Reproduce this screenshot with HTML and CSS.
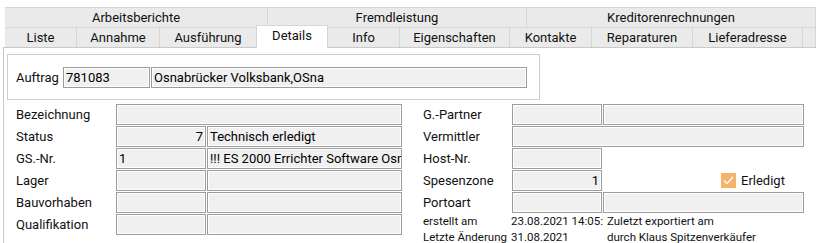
FILE: index.html
```html
<!DOCTYPE html>
<html lang="de">
<head>
    <meta charset="UTF-8">
    <title>Auftrag Details</title>
    <link rel="stylesheet" href="styles.css">
</head>
<body>
    <div class="tabs">
        <div class="tab-groups">
            <div class="group g-arbeit">Arbeitsberichte</div>
            <div class="group g-fremd">Fremdleistung</div>
            <div class="group g-kredit">Kreditorenrechnungen</div>
        </div>
        <div class="tab-row">
            <div class="tab t-liste">Liste</div>
            <div class="tab t-annahme">Annahme</div>
            <div class="tab t-ausf">Ausführung</div>
            <div class="tab t-details active">Details</div>
            <div class="tab t-info">Info</div>
            <div class="tab t-eigen">Eigenschaften</div>
            <div class="tab t-kontakte">Kontakte</div>
            <div class="tab t-rep">Reparaturen</div>
            <div class="tab t-liefer">Lieferadresse</div>
            <div class="tab t-rest"></div>
        </div>
    </div>

    <div class="panel">
        <div class="order-box">
            <span class="order-label">Auftrag</span>
            <div class="field order-nr">781083</div>
            <div class="field order-name">Osnabrücker Volksbank,OSna</div>
        </div>

        <div class="form">
            <div class="col col-left">
                <div class="row">
                    <span class="label">Bezeichnung</span>
                    <div class="field full"></div>
                </div>
                <div class="row">
                    <span class="label">Status</span>
                    <div class="field small right">7</div>
                    <div class="field big">Technisch erledigt</div>
                </div>
                <div class="row">
                    <span class="label">GS.-Nr.</span>
                    <div class="field small">1</div>
                    <div class="field big">!!! ES 2000 Errichter Software Osnabrück</div>
                </div>
                <div class="row">
                    <span class="label">Lager</span>
                    <div class="field small"></div>
                    <div class="field big"></div>
                </div>
                <div class="row">
                    <span class="label">Bauvorhaben</span>
                    <div class="field small"></div>
                    <div class="field big"></div>
                </div>
                <div class="row">
                    <span class="label">Qualifikation</span>
                    <div class="field small"></div>
                    <div class="field big"></div>
                </div>
            </div>

            <div class="col col-right">
                <div class="row">
                    <span class="label">G.-Partner</span>
                    <div class="field small"></div>
                    <div class="field big"></div>
                </div>
                <div class="row">
                    <span class="label">Vermittler</span>
                    <div class="field full"></div>
                </div>
                <div class="row">
                    <span class="label">Host-Nr.</span>
                    <div class="field small"></div>
                </div>
                <div class="row">
                    <span class="label">Spesenzone</span>
                    <div class="field small right">1</div>
                    <label class="check">
                        <span class="check-box">
                            <svg width="15" height="15" viewBox="0 0 15 15"><path d="M3 7.5 L6 10.5 L12 4" fill="none" stroke="#fff" stroke-width="1.3"/></svg>
                        </span>
                        Erledigt
                    </label>
                </div>
                <div class="row">
                    <span class="label">Portoart</span>
                    <div class="field small"></div>
                    <div class="field big"></div>
                </div>
                <div class="info-row">
                    <span class="info-label">erstellt am</span>
                    <span class="info-date">23.08.2021 14:05:13</span>
                    <span class="info-text">Zuletzt exportiert am</span>
                </div>
                <div class="info-row">
                    <span class="info-label">Letzte Änderung</span>
                    <span class="info-date">31.08.2021</span>
                    <span class="info-text">durch Klaus Spitzenverkäufer</span>
                </div>
            </div>
        </div>
    </div>
</body>
</html>
```

FILE: styles.css
```css
body {
    font-family: Roboto, "Liberation Sans", Arial, sans-serif;
    font-size: 13px;
    margin: 0;
    padding: 0;
    background: #fff;
    color: #111;
    overflow: hidden;
}

/* tab header */
.tabs {
    padding: 7px 0 0 5px;
}
.tab-groups,
.tab-row {
    display: flex;
    height: 20px;
}
.group,
.tab {
    box-sizing: border-box;
    height: 20px;
    line-height: 19px;
    text-align: center;
    background: #eaeaea;
    border-top: 1px solid #d6d6d6;
    border-right: 1px solid #d6d6d6;
    white-space: nowrap;
}
.g-arbeit { width: 263px; }
.g-fremd { width: 259px; }
.g-kredit { flex: 1; }

.t-liste { width: 72px; }
.t-annahme { width: 83px; }
.t-ausf { width: 97px; }
.t-details { width: 71px; }
.t-info { width: 72px; }
.t-eigen { width: 110px; }
.t-kontakte { width: 82px; }
.t-rep { width: 101px; }
.t-liefer { width: 110px; }
.t-rest { flex: 1; }

.tab.active {
    position: relative;
    z-index: 1;
    height: 23px;
    margin-top: -2px;
    line-height: 19px;
    background: #fff;
    border-left: 1px solid #d6d6d6;
    margin-left: -1px;
    width: 72px;
}

/* content panel */
.panel {
    margin-left: 3px;
    border-left: 1px solid #c9c9c9;
    border-top: 1px solid #c9c9c9;
    height: 200px;
}

.order-box {
    box-sizing: border-box;
    width: 533px;
    height: 46px;
    margin: 6px 0 0 3px;
    padding: 12px 0 0 8px;
    border: 1px solid #cdcdcd;
    display: flex;
    gap: 1px;
}
.order-label {
    width: 46px;
    line-height: 21px;
}
.order-nr { width: 87px; }
.order-name { width: 376px; }

.field {
    box-sizing: border-box;
    height: 21px;
    line-height: 19px;
    padding: 0 2px;
    border: 1px solid #9c9c9c;
    box-shadow: inset 0 0 0 1px #fff;
    background: #f0f0f0;
    color: #000;
    white-space: nowrap;
    overflow: hidden;
}
.field.right {
    text-align: right;
}

/* form columns */
.form {
    display: flex;
    margin-top: 4px;
}
.col {
    display: flex;
    flex-direction: column;
    gap: 1px;
}
.row {
    display: flex;
    gap: 1px;
    height: 21px;
}
.label {
    line-height: 21px;
    white-space: nowrap;
}

.col-left {
    margin-left: 12px;
    width: 386px;
}
.col-left .label { width: 99px; }
.col-left .full { width: 286px; }
.col-left .small { width: 90px; }
.col-left .big { width: 195px; }

.col-right {
    margin-left: 21px;
}
.col-right .label { width: 88px; }
.col-right .full { width: 292px; }
.col-right .small { width: 90px; }
.col-right .big { width: 201px; }

.check {
    display: flex;
    align-items: center;
    gap: 5px;
    margin-left: 118px;
    line-height: 21px;
}
.check-box {
    width: 15px;
    height: 15px;
    background: #f6b46a;
    display: block;
}
.check-box svg {
    display: block;
}

.info-row {
    display: flex;
    height: 15px;
    line-height: 15px;
    font-size: 11.5px;
    white-space: nowrap;
}
.info-label { width: 88px; }
.info-date {
    width: 93px;
    overflow: hidden;
}
.info-text { margin-left: 3px; }
```
